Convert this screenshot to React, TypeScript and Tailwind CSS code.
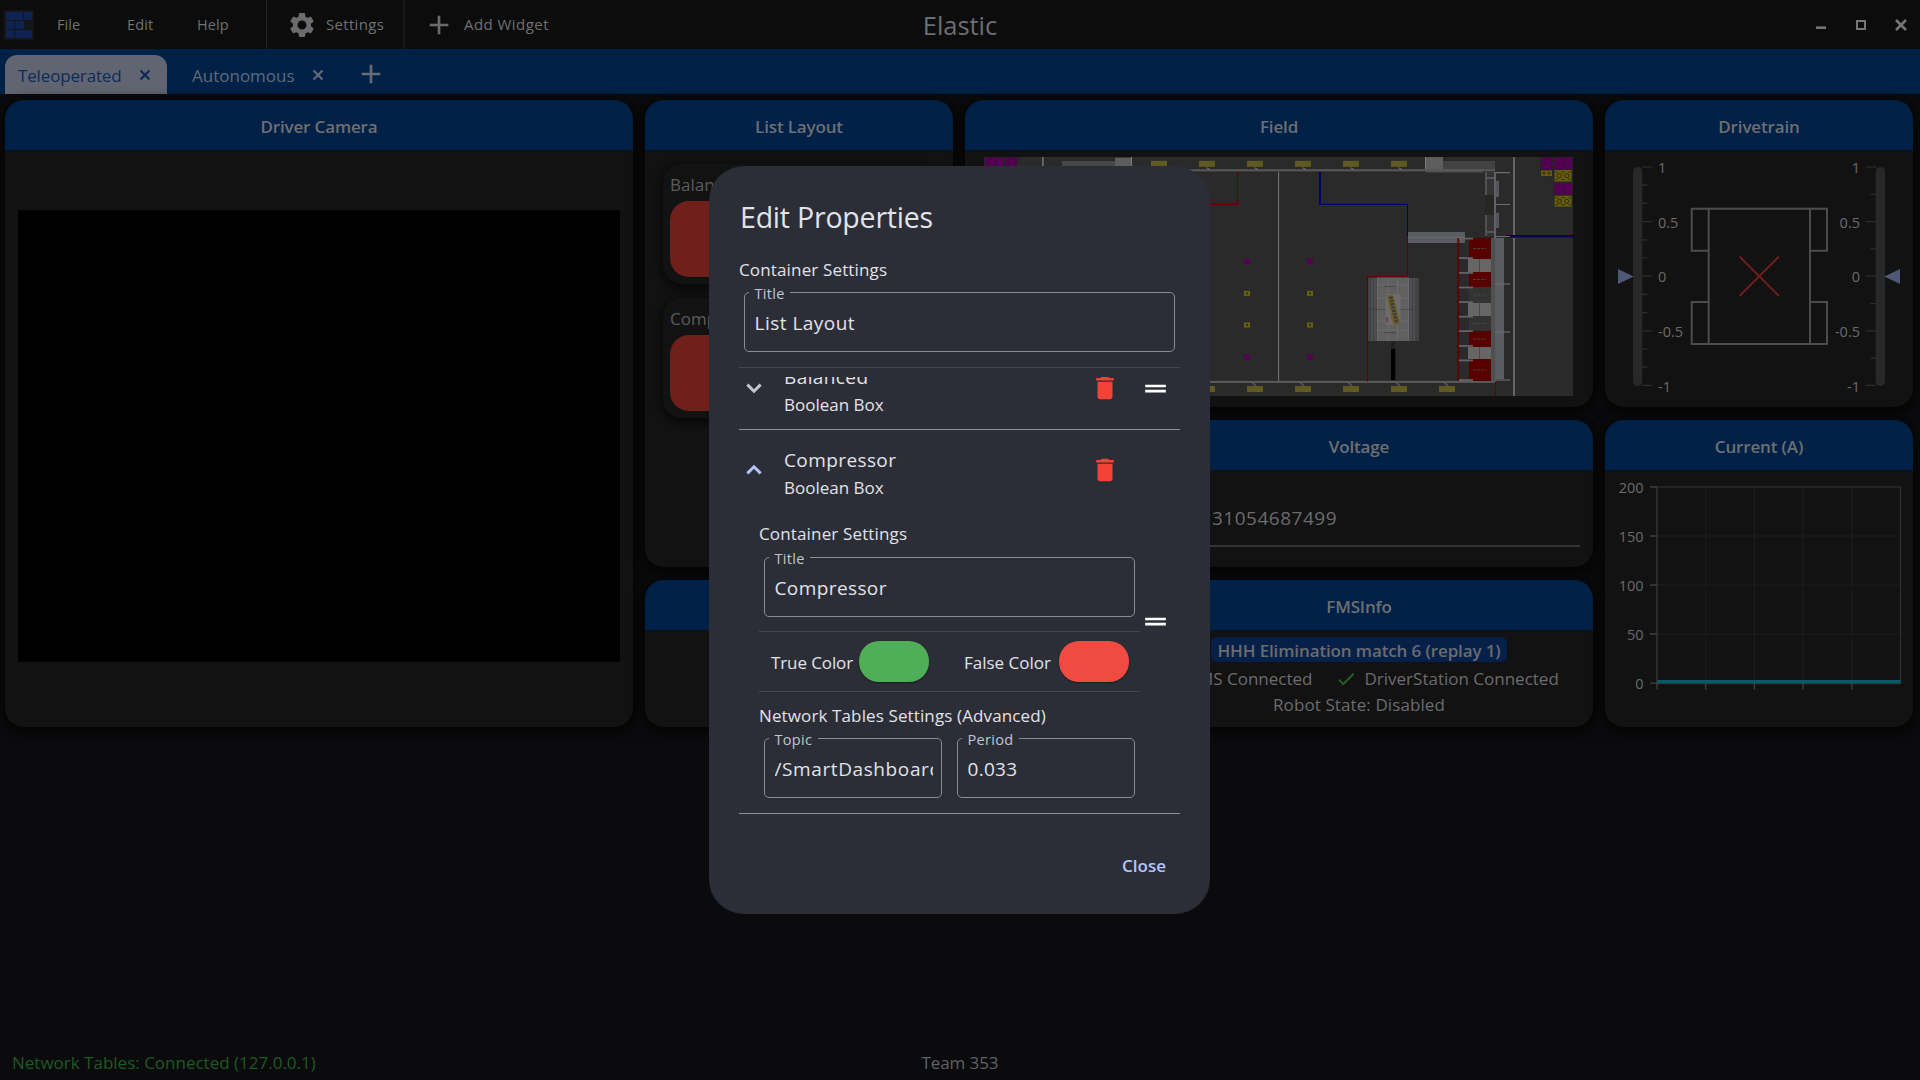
import type { ReactNode } from "react";
import { MdAdd, MdCheck, MdDelete, MdDragHandle, MdSettings } from "react-icons/md";

function Logo() {
  return (
    <svg width="30" height="30" viewBox="0 0 30 30" className="ml-1">
      <rect width="30" height="30" fill="#14161a" />
      <g fill="#0f2352">
        <rect x="2" y="2" width="17" height="8" />
        <rect x="20.2" y="2" width="7.8" height="8" />
        <rect x="2" y="11" width="8" height="8" />
        <rect x="11.2" y="11" width="9" height="8" rx="1" />
        <rect x="2" y="20" width="8" height="8" />
        <rect x="11.2" y="20" width="16.8" height="8" rx="1" />
      </g>
    </svg>
  );
}

function CloseIcon({ size, className = "" }: { size: number; className?: string }) {
  return (
    <svg width={size} height={size} viewBox="0 0 24 24" className={`shrink-0 ${className}`}>
      <path d="M6 6l12 12M18 6L6 18" stroke="currentColor" strokeWidth="3" />
    </svg>
  );
}

function Chevron({ open }: { open: boolean }) {
  return open ? (
    <svg width="30" height="30" viewBox="0 0 24 24" className="mb-[2px] shrink-0 text-[#b2c5ff]">
      <path d="M6.7 14.7L12 9.4l5.3 5.3" fill="none" stroke="currentColor" strokeWidth="2.4" />
    </svg>
  ) : (
    <svg width="30" height="30" viewBox="0 0 24 24" className="shrink-0 text-[#c5c6d0]">
      <path d="M6.7 9.3l5.3 5.3 5.3-5.3" fill="none" stroke="currentColor" strokeWidth="2.4" />
    </svg>
  );
}

function TopBar() {
  return (
    <header className="grid h-[49px] grid-cols-[1fr_auto_1fr] items-center bg-[#0c0c0c] text-[14.5px] text-[#707173]">
      <div className="flex h-full items-center">
        <Logo />
        <span className="ml-[23px] w-[70px] tracking-[0.1px]">File</span>
        <span className="w-[70px] tracking-[0.1px]">Edit</span>
        <span className="w-[69px] tracking-[0.1px]">Help</span>
        <div className="h-full w-px bg-[#222225]" />
        <MdSettings size={30} className="ml-[20px] text-[#6b6b6e]" />
        <span className="ml-[9px] w-[77px] text-[15px] tracking-[0.32px]">Settings</span>
        <div className="h-full w-[2px] bg-[#18181b]" />
        <MdAdd size={32} className="ml-[18px] text-[#6b6b6e]" />
        <span className="ml-[9px] text-[15px] tracking-[0.45px]">Add Widget</span>
      </div>
      <h1 className="pt-px text-[25.5px] tracking-[-0.05px] text-[#6d6e71]">Elastic</h1>
      <div className="flex h-full items-center justify-end pr-[9px]">
        <svg width="10" height="3" className="mt-[6px]">
          <rect width="10" height="1" fill="#4c4c4c" />
          <rect y="1" width="10" height="2" fill="#737373" />
        </svg>
        <div className="ml-[30px] size-[10px] border-2 border-[#757575]" />
        <CloseIcon size={20} className="ml-[25px] text-[#777]" />
      </div>
    </header>
  );
}

function TabBar() {
  return (
    <nav className="flex h-[45px] items-end bg-[#002147] pl-[5px] text-[17px]">
      <div className="flex h-[39px] w-[162px] items-center rounded-t-xl bg-[#616572] pl-[13px] text-[#0c2b58]">
        <span className="w-[118px] pt-[3px] tracking-[-0.15px]">Teleoperated</span>
        <CloseIcon size={18} />
      </div>
      <div className="flex h-[39px] items-center pl-[25px] text-[#5f6a7c]">
        <span className="w-[117px] pt-[3px]">Autonomous</span>
        <CloseIcon size={18} />
      </div>
      <MdAdd size={32} className="mb-[4px] ml-[28px] text-[#646b75]" />
    </nav>
  );
}

function Card({
  title,
  className,
  children,
}: {
  title: string;
  className: string;
  children?: ReactNode;
}) {
  return (
    <section
      className={`flex flex-col overflow-hidden rounded-[19px] bg-[#121212] shadow-[0_3px_12px_4px_rgba(0,0,0,0.6)] ${className}`}
    >
      <h2 className="flex h-[50px] shrink-0 items-center justify-center bg-[#002147] pt-[3px] text-[17px] font-semibold tracking-[-0.15px] text-[#6e6f72]">
        {title}
      </h2>
      {children}
    </section>
  );
}

function ListItem({ label }: { label: string }) {
  return (
    <div className="h-[120px] rounded-[19px] bg-[#121212] px-[7px] pt-[9px] shadow-[0_3px_10px_2px_rgba(0,0,0,0.6)]">
      <div className="h-[24px] text-[17px] leading-[24px] text-[#5b5c5e]">{label}</div>
      <div className="mt-[4px] h-[76px] rounded-[19px] bg-[#70201a]" />
    </div>
  );
}

const PIECES: [number, number, number, number, string][] = [
  [985, 157.5, 18, 12, "#560056"],
  [1005, 157.5, 12, 12, "#560056"],
  [1541, 157.5, 11.5, 12, "#560056"],
  [1554, 157.5, 18, 12, "#560056"],
  [1541, 170.5, 11, 5.5, "#655d0d"],
  [1554.5, 170, 17, 11.5, "#655d0d"],
  [1554, 183, 18, 11.5, "#560056"],
  [1554.5, 195.7, 17, 11, "#655d0d"],
];

const GRID_CELLS: [number, number, string][] = [
  [238, 21, "#580000"],
  [259, 13, "#666666"],
  [272, 15, "#580000"],
  [287, 16, "#333333"],
  [303, 13, "#666666"],
  [316, 15, "#333333"],
  [331, 16, "#580000"],
  [347, 12, "#666666"],
  [359, 22, "#580000"],
];

function FieldMap() {
  return (
    <svg
      width="589"
      height="239"
      viewBox="984 157 589 239"
      className="ml-[19px] mt-[7px] shrink-0"
    >
      <rect x="984" y="157" width="589" height="239" fill="#2a2a2a" />
      {PIECES.map(([x, y, w, h, fill], i) => (
        <g key={i}>
          <rect x={x - 0.7} y={y - 0.5} width={w + 1.4} height={h + 1} fill="#252525" />
          <rect x={x} y={y} width={w} height={h} fill={fill} />
          {fill === "#560056" ? (
            <path
              d={`M${x} ${y + 4}h2m3 -3h2m3 3h2M${x + 3} ${y + 6}h2m3 2h2M${x} ${y + 9}h2m3 2h2m3 -2h2`}
              stroke="#2c132c"
              strokeWidth="1.3"
            />
          ) : (
            <g fill="none" stroke="#2f2c12" strokeWidth="1">
              <circle cx={x + w * 0.28} cy={y + h / 2} r={h * 0.19} />
              <circle cx={x + w * 0.72} cy={y + h / 2} r={h * 0.19} />
              {h > 8 && (
                <path d={`M${x + 1} ${y + 2}h2m4 0h3m4 0h2M${x + 1} ${y + h - 2}h2m4 0h3m4 0h2`} />
              )}
            </g>
          )}
        </g>
      ))}

      {/* perimeter walls and side structures */}
      <rect x="1042" y="157" width="1.7" height="12" fill="#6a6a6a" />
      <rect x="1062" y="161" width="53" height="7" fill="#474747" />
      <rect x="1115" y="157.7" width="16" height="12" fill="#5d5d5d" />
      <rect x="1131" y="157" width="1" height="13" fill="#7a7a7a" />
      <rect x="1443" y="161" width="52" height="9" fill="#424242" />
      <rect x="1426" y="169" width="57" height="3.6" fill="#4b4b4b" />
      <rect x="1425" y="157" width="18" height="12" fill="#5d5d5d" />
      <rect x="1425" y="157" width="1" height="13" fill="#7a7a7a" />
      <rect x="1130" y="169.3" width="365" height="2" fill="#5a5b5f" />
      <rect x="1130" y="380.9" width="365" height="2" fill="#5a5b5f" />
      {[1151, 1199, 1247, 1295, 1343, 1391].map((x) => (
        <g key={x}>
          <path d={`M${x + 8} 166v2.5h2v2`} stroke="#66676b" fill="none" />
          <rect x={x} y="160.8" width="16" height="6" fill="#605a22" />
        </g>
      ))}
      {[1151, 1199, 1247, 1295, 1343, 1391, 1439].map((x) => (
        <g key={x}>
          <path d={`M${x + 8} 386v-2h-2v-2`} stroke="#66676b" fill="none" />
          <rect x={x} y="386" width="16" height="6" fill="#605a22" />
        </g>
      ))}

      {/* tape lines */}
      <rect x="1278" y="172" width="1.1" height="209" fill="#727272" />
      <path d="M1237.5 172v32.4h-30" fill="none" stroke="#650000" strokeWidth="1.1" />
      <path d="M1320 172v32.4h87.5v32" fill="none" stroke="#000066" strokeWidth="1.1" />
      <rect x="1319" y="172" width="2" height="33" fill="#000066" />
      <rect x="1408" y="232" width="57" height="11" fill="#5b5c61" />
      <path d="M1408 237.3h57" stroke="#717277" strokeWidth="0.8" />
      <path d="M1407.5 238v38.5h-40v105" fill="none" stroke="#650000" strokeWidth="1.1" />
      <rect x="1457.4" y="238" width="1.8" height="143" fill="#650000" />
      <rect x="1495" y="383" width="1" height="13" fill="#650000" />
      <rect x="1513" y="157" width="2" height="239" fill="#656565" />
      <rect x="1507" y="235" width="66" height="2" fill="#060060" />
      <rect x="1507" y="237" width="66" height="1" fill="#600000" />

      {/* charging station */}
      <rect x="1368" y="278" width="51" height="63" fill="#424244" />
      <path d="M1372 278v63M1375 278v63M1411 278v63M1414 278v63" stroke="#56575a" strokeWidth="1.2" />
      <rect x="1377" y="277.5" width="32" height="63.5" fill="#606060" />
      <path
        d="M1377.3 278v63M1388 278v63M1397.5 278v63M1408.7 278v63M1377 285h32M1377 298h32M1377 309h32M1377 321h32M1377 330h32"
        stroke="#707070"
        strokeWidth="0.8"
      />
      <path d="M1368 309.3h51M1384 286.3h12M1384 332.6h12" stroke="#3f3f41" strokeWidth="0.8" />
      <rect x="1385.5" y="294" width="15" height="31" fill="#6c6c6c" />
      <path d="M1386.5 295h7l7 29.5h-7.5z" fill="#6f6128" />
      <path d="M1390.5 296.5l6.3 27" stroke="#3d3d3d" strokeWidth="4" strokeDasharray="2.4 1" />
      <rect x="1386" y="317" width="2" height="5" fill="#6d4141" />
      <rect x="1391" y="342" width="4.5" height="7" fill="#202020" />
      <rect x="1391" y="349" width="4.2" height="31" fill="#000" />

      {/* double substation */}
      <rect x="1485" y="172" width="10" height="64" fill="#343434" />
      <rect x="1485" y="172" width="2" height="64" fill="#505155" />
      <path d="M1487 178h8M1487 232h8" stroke="#606166" strokeWidth="1.6" />
      <rect x="1485" y="195" width="10" height="20" fill="#262626" />
      <rect x="1494" y="172" width="2" height="209" fill="#606166" />
      <rect x="1496" y="181" width="3" height="16" fill="#55565b" />
      <rect x="1496" y="213" width="3" height="15" fill="#55565b" />

      {/* scoring grids */}
      {GRID_CELLS.map(([y, h, fill]) => (
        <g key={y}>
          <rect
            x={fill === "#666666" ? 1468 : 1469}
            y={y}
            width={fill === "#666666" ? 23 : 22}
            height={h}
            fill={fill}
          />
          {fill === "#666666" ? (
            <path d={`M1479.5 ${y}v${h}`} stroke="#4a4a4a" />
          ) : (
            <path d={`M1473 ${y + h / 2}h13`} stroke="#484848" strokeWidth="0.9" strokeDasharray="3 1" />
          )}
        </g>
      ))}
      <rect x="1491" y="238" width="4.5" height="143" fill="#505052" />
      <rect x="1495.5" y="238" width="8.5" height="141" fill="#5b5c61" />
      {[238.5, 258, 272.8, 287.4, 302, 316.6, 331, 345.8, 360.3, 380].map((y) => (
        <rect key={y} x="1459" y={y - 0.8} width="14" height="1.8" fill="#626367" />
      ))}
      {[172.7, 204.5, 236.5, 284, 332, 380].map((y) => (
        <path key={y} d={`M1495 ${y}h15`} stroke="#6b6c70" strokeWidth="1.2" />
      ))}

      {/* game pieces on the floor */}
      {[1247, 1310].map((x) => (
        <g key={x}>
          <circle cx={x} cy="261.5" r="3.1" fill="#560056" />
          <circle cx={x} cy="357" r="3.1" fill="#560056" />
          {[293.4, 325].map((y) => (
            <g key={y}>
              <rect x={x - 3} y={y - 2.5} width="6" height="5" fill="#6b630c" />
              <rect x={x - 1} y={y - 1} width="2" height="2" fill="#2f2c12" />
            </g>
          ))}
        </g>
      ))}
    </svg>
  );
}

function Drivetrain() {
  const labels = ["1", "0.5", "0", "-0.5", "-1"];
  return (
    <svg width="308" height="257" viewBox="1605 150 308 257" className="shrink-0">
      <rect x="1633" y="167" width="9.3" height="219" rx="4.6" fill="#282828" />
      <rect x="1875.7" y="167" width="9.3" height="219" rx="4.6" fill="#282828" />
      <g stroke="#2c2c2c" strokeWidth="1.2">
        {Array.from({ length: 13 }, (_, i) => (
          <path key={i} d={`M1642 ${167 + i * 18.2}h${i % 3 === 0 ? 10.5 : 5.5}`} />
        ))}
        {Array.from({ length: 9 }, (_, i) => (
          <path key={i} d={`M1876 ${167 + i * 27.3}h${i % 2 === 0 ? -10.5 : -5.5}`} />
        ))}
      </g>
      <g fontSize="14.5" fill="#6b6b6b">
        {labels.map((t, i) => (
          <g key={t}>
            <text x="1658" y={173 + i * 54.7}>
              {t}
            </text>
            <text x="1860" y={173 + i * 54.7} textAnchor="end">
              {t}
            </text>
          </g>
        ))}
      </g>
      <path d="M1618 269v15l15.7 -7.5zM1900 269v15l-15.7 -7.5z" fill="#4d5976" />
      <g fill="none" stroke="#4c4c4c" strokeWidth="2">
        <rect x="1708.7" y="208.7" width="101.3" height="135.3" />
        <path d="M1708.7 208.7h-17v42h17M1810 208.7h17v42h-17M1708.7 302h-17v42h17M1810 302h17v42h-17" />
      </g>
      <path d="M1739.5 256.5l39.5 39.5M1779 256.5l-39.5 39.5" stroke="#711f18" strokeWidth="1.9" />
    </svg>
  );
}

function CurrentChart() {
  const xs = [1657, 1705.7, 1754.4, 1803.1, 1851.8];
  const ys = [487, 536, 585, 634, 683.2];
  return (
    <svg width="308" height="257" viewBox="1605 470 308 257" className="shrink-0">
      <g stroke="#1c1c20" strokeWidth="1.2">
        {xs.slice(1).map((x) => (
          <path key={x} d={`M${x} 487v196`} />
        ))}
        {ys.slice(1, 4).map((y) => (
          <path key={y} d={`M1657 ${y}h243.5`} />
        ))}
      </g>
      <path d="M1657 487h243.5" stroke="#232325" strokeWidth="2" />
      <path d="M1900.5 487v196.5" stroke="#303032" strokeWidth="1.2" />
      <path d="M1657 487v196.5h243.5" stroke="#363636" strokeWidth="1.4" fill="none" />
      <g stroke="#424242" strokeWidth="1.3">
        {xs.map((x) => (
          <path key={x} d={`M${x} 683v6.5`} />
        ))}
        {ys.map((y) => (
          <path key={y} d={`M1650 ${y}h7`} />
        ))}
      </g>
      <path d="M1657 681.5h243.7" stroke="#005c67" strokeWidth="3" />
      <g fontSize="14.5" fill="#6b6b6b" textAnchor="end">
        {["200", "150", "100", "50", "0"].map((t, i) => (
          <text key={t} x="1643.5" y={493 + i * 49.1}>
            {t}
          </text>
        ))}
      </g>
    </svg>
  );
}

function Field({
  label,
  value,
  className = "",
  valueClass = "tracking-[0.3px]",
}: {
  label: string;
  value: string;
  className?: string;
  valueClass?: string;
}) {
  return (
    <div
      className={`relative h-[60px] rounded-[5px] border border-[#8b8c96] pl-[9.5px] pr-[8px] pt-[16px] ${className}`}
    >
      <span className="absolute left-[4px] top-[-9px] bg-[#2c2e37] px-[5.5px] text-[14.5px] leading-[20px] tracking-[0.3px] text-[#c3c5d0]">
        {label}
      </span>
      <div
        className={`h-[28px] overflow-hidden whitespace-nowrap text-[19px] leading-[28px] text-[#e2e2e9] ${valueClass}`}
      >
        {value}
      </div>
    </div>
  );
}

function ItemHeader({ name, open }: { name: string; open: boolean }) {
  return (
    <div className="flex h-[82px] items-center">
      <Chevron open={open} />
      <div className="ml-[15px] flex-1 pt-[4px] text-[#e2e2e9]">
        <div className="h-[28px] text-[19px] leading-[26px] tracking-[0.4px]">{name}</div>
        <div className="h-[25px] text-[17px] leading-[26px]">Boolean Box</div>
      </div>
      <MdDelete size={30} className={`mr-[20px] shrink-0 text-[#f44336] ${open ? "mb-[2px]" : ""}`} />
    </div>
  );
}

function ColorSetting({ label, swatch, className }: { label: string; swatch: string; className: string }) {
  return (
    <div className={`flex items-center justify-between ${className}`}>
      <span className="pt-[2px]">{label}</span>
      <div className={`h-[41px] w-[70px] rounded-[20px] shadow-[0_1px_2px_rgba(0,0,0,0.4)] ${swatch}`} />
    </div>
  );
}

function Dialog() {
  return (
    <div className="fixed inset-0 flex items-center justify-center pr-px">
      <div className="flex h-[748px] w-[501px] flex-col rounded-[35px] bg-[#2c2e37] px-[30px] pt-[31px] text-[17px] text-[#e2e2e9]">
        <h2 className="h-[40px] pl-px text-[28.5px] leading-[40px] tracking-[-0.2px]">Edit Properties</h2>
        <div className="mt-[21px] h-[24px] leading-[24px] tracking-[0.15px]">Container Settings</div>
        <Field label="Title" value="List Layout" className="mx-[5px] mt-[10px]" valueClass="tracking-[0.48px]" />
        <div className="mt-[15px] h-px shrink-0 bg-[#45464f]" />
        <div className="mt-[9px] h-[438px] shrink-0 overflow-hidden">
          <div className="mt-[-30px] flex items-center border-b border-[#8f909a]">
            <div className="w-[401px]">
              <ItemHeader name="Balanced" open={false} />
            </div>
            <MdDragHandle size={31} className="text-white" />
          </div>
          <div className="flex items-center border-b border-[#8f909a]">
            <div className="w-[401px] pb-[15px]">
              <ItemHeader name="Compressor" open />
              <div className="pl-[20px]">
                <div className="mt-[10px] h-[24px] leading-[24px] tracking-[0.15px]">Container Settings</div>
                <Field label="Title" value="Compressor" className="mx-[5px] mt-[11px]" valueClass="tracking-[0.4px]" />
                <div className="mt-[14px] h-px bg-[#45464f]" />
                <div className="mt-[9px] flex justify-between pl-[12px] pr-[11px]">
                  <ColorSetting label="True Color" swatch="bg-[#50ae58]" className="w-[158px] tracking-[-0.1px]" />
                  <ColorSetting label="False Color" swatch="bg-[#f04b40]" className="w-[165px]" />
                </div>
                <div className="mt-[9px] h-px bg-[#45464f]" />
                <div className="mt-[12px] h-[24px] leading-[24px] tracking-[0.12px]">
                  Network Tables Settings (Advanced)
                </div>
                <div className="mx-[5px] mt-[10px] flex justify-between">
                  <Field
                    label="Topic"
                    value="/SmartDashboard/Compressor"
                    className="w-[178px]"
                    valueClass="tracking-[0.6px]"
                  />
                  <Field label="Period" value="0.033" className="w-[178px]" />
                </div>
              </div>
            </div>
            <MdDragHandle size={31} className="text-white" />
          </div>
        </div>
        <div className="mt-[39px] pr-[14px] text-right font-semibold leading-[24px] text-[#b2c5ff]">
          Close
        </div>
      </div>
    </div>
  );
}

export default function App() {
  return (
    <div className="flex h-[1080px] w-[1920px] flex-col overflow-hidden bg-[#0b0b0d] font-['Open_Sans','Noto_Sans',sans-serif]">
      <TopBar />
      <TabBar />
      <main className="grid grid-cols-[repeat(12,148px)] grid-rows-[repeat(4,147px)] gap-x-[12px] gap-y-[13px] pl-[5px] pt-[6px]">
        <Card title="Driver Camera" className="col-span-4 col-start-1 row-span-4 row-start-1">
          <div className="mx-[13px] mt-[60px] h-[452px] bg-black" />
        </Card>
        <Card title="List Layout" className="col-span-2 col-start-5 row-span-3 row-start-1">
          <div className="flex flex-col gap-[14px] px-[18px] pt-[14px]">
            <ListItem label="Balanced" />
            <ListItem label="Compressor" />
          </div>
        </Card>
        <Card title="Field" className="col-span-4 col-start-7 row-span-2 row-start-1">
          <FieldMap />
        </Card>
        <Card title="Drivetrain" className="col-span-2 col-start-11 row-span-2 row-start-1">
          <Drivetrain />
        </Card>
        <Card title="Voltage" className="col-span-3 col-start-8 row-start-3">
          <div className="mx-[13px] h-[77px] border-b-2 border-[#343434] pl-[74px] pt-[34px] text-[19px] leading-[28px] tracking-[0.5px] text-[#6b6b6e]">
            31054687499
          </div>
        </Card>
        <Card title="" className="col-span-3 col-start-5 row-start-4" />
        <Card title="FMSInfo" className="col-span-3 col-start-8 row-start-4">
          <div className="flex flex-col items-center pt-[7px] text-[17px] leading-[26px] text-[#6b6c6e]">
            <div className="h-[25px] rounded-[6px] bg-[#06204a] px-[6px] pt-px font-semibold leading-[25px] tracking-[-0.12px]">
              HHH Elimination match 6 (replay 1)
            </div>
            <div className="mt-[4px] flex h-[26px] items-center whitespace-nowrap">
              <MdCheck size={22} className="mr-[8px] text-[#215f25]" />
              <span className="mr-[22px]">FMS Connected</span>
              <MdCheck size={22} className="mr-[8px] text-[#215f25]" />
              <span>DriverStation Connected</span>
            </div>
            <div className="tracking-[0.1px]">Robot State: Disabled</div>
          </div>
        </Card>
        <Card title="Current (A)" className="col-span-2 col-start-11 row-span-2 row-start-3">
          <CurrentChart />
        </Card>
      </main>
      <footer className="mt-auto grid h-[34px] grid-cols-[1fr_auto_1fr] items-center px-[12px] text-[17px] text-[#606165]">
        <span className="text-[#1f5922]">Network Tables: Connected (127.0.0.1)</span>
        <span className="tracking-[-0.1px]">Team 353</span>
      </footer>
      <Dialog />
    </div>
  );
}
